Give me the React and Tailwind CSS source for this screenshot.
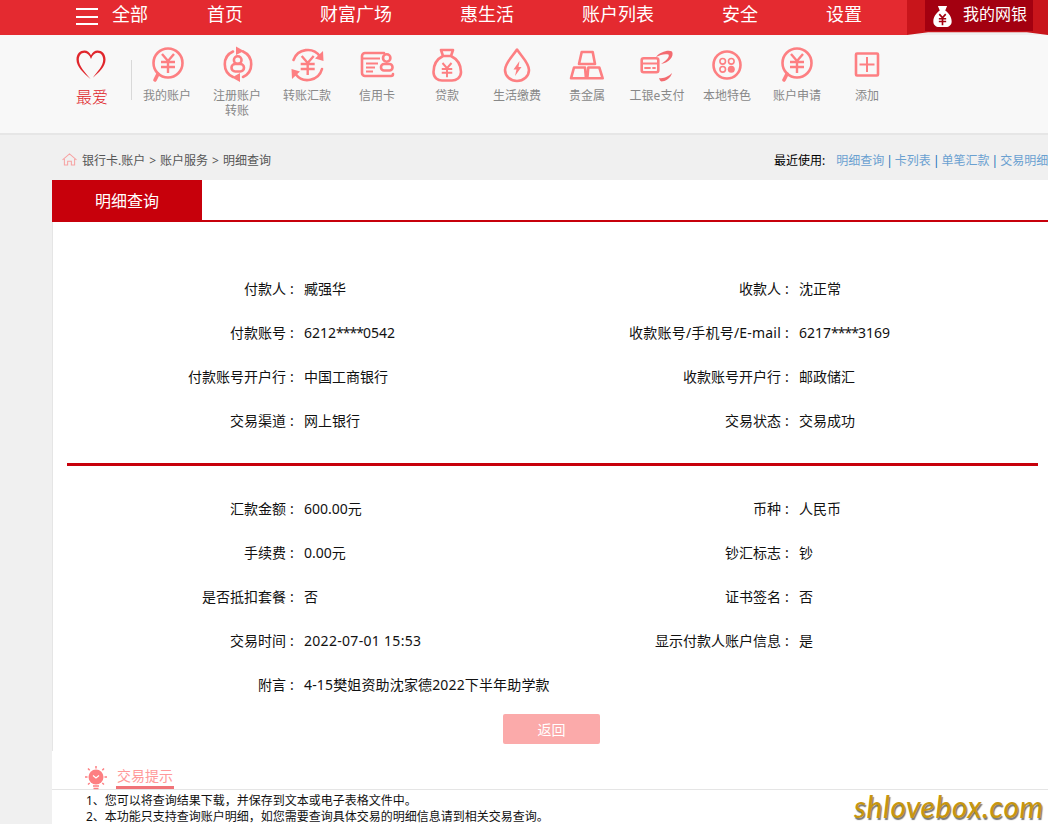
const PINK = "#fd7f82";

function Yen({ x = 22, y = 20, s = 1, w = 2.4 }) {
  return (
    <g transform={`translate(${x} ${y}) scale(${s})`} stroke={PINK} strokeWidth={w} fill="none">
      <path d="M-6-8 0-1 6-8M-7 0H7M-7 5H7M0-1V11" />
    </g>
  );
}

const S = { fill: "none", stroke: PINK, strokeWidth: 2.6, strokeLinecap: "round", strokeLinejoin: "round" };

function Icon({ children }) {
  return (
    <svg viewBox="0 0 44 44" className="w-[44px] h-[44px] block">
      {children}
    </svg>
  );
}

const icons = {
  account: (
    <Icon>
      <circle cx="23" cy="20" r="14.5" {...S} />
      <path d="M13 31 10 37" {...S} strokeWidth="3.6" />
      <Yen x={23} y={19} />
    </Icon>
  ),
  register: (
    <Icon>
      <path d="M28 8.500A14 14 0 0 1 28 34M18 34A14 14 0 0 1 18 8.500" {...S} />
      <path d="M21 3.500 29 8 21 12ZM25 30 17 34.500 25 39Z" fill={PINK} />
      <circle cx="22.700" cy="17" r="3.800" {...S} />
      <rect x="16.500" y="21" width="12.500" height="7.500" rx="3.700" {...S} />
    </Icon>
  ),
  transfer: (
    <Icon>
      <path d="M8.500 17A15 15 0 0 1 35 13.500M37 26A15 15 0 0 1 10.500 31" {...S} />
      <path d="M38 8 38.500 18 30 15.500ZM7 36 6.500 26 15 28.500Z" fill={PINK} />
      <Yen x={22.700} y={21} />
    </Icon>
  ),
  card: (
    <Icon>
      <path d="M29 10H10a3 3 0 0 0-3 3V30a3 3 0 0 0 3 3H36a2 2 0 0 0 2-2" {...S} />
      <path d="M8 15.500H25M11 20.500H23M11 24.500H20M11 28.500H18" {...S} strokeWidth="1.800" strokeLinecap="butt" />
      <circle cx="31.700" cy="15" r="3.700" {...S} />
      <rect x="26" y="21" width="11.500" height="6.500" rx="3" {...S} />
    </Icon>
  ),
  loan: (
    <Icon>
      <path d="M16 7H28L26 13C32 16 36 22 36 29 36 35 31 37.500 27 37.500H17C13 37.500 8.500 35 8.500 29 8.500 22 12 16 18 13ZM18 13H26" {...S} />
      <Yen x={22} y={26} s={0.75} w={2.600} />
    </Icon>
  ),
  life: (
    <Icon>
      <path d="M22 6.500C17 14 10 20 10 27A12 11 0 0 0 34 27C34 20 27 14 22 6.500Z" {...S} />
      <path d="M24.500 18 18.500 26.500H21.500L20 33 26.500 24H23.500Z" fill={PINK} />
    </Icon>
  ),
  gold: (
    <Icon>
      <path d="M16.700 9H27.700L30 21H14ZM9 24.500H20L21 35.300H6ZM23.300 24.500H34.300L37.700 35.300H22.300Z" {...S} />
    </Icon>
  ),
  epay: (
    <Icon>
      <rect x="6.700" y="15.300" width="16.600" height="14" rx="2" {...S} />
      <path d="M7 20.500H23" {...S} strokeWidth="1.800" />
      <path d="M10 25H15M18 25H20" {...S} strokeWidth="1.800" />
      <path d="M21 14C25 9 33 6.500 37 8.500 39.500 13 34 20 26 21 31 18 35 14 33.500 11.500 29.500 10.500 25 12 21 14Z" fill="#f36b70" />
      <path d="M24 35C29 36 34 33 37 30 36 35 30 38.500 26.500 38.500 25 38 24.500 36.500 24 35Z" fill="#f36b70" />
    </Icon>
  ),
  local: (
    <Icon>
      <circle cx="22" cy="22" r="13.500" {...S} />
      <g fill="none" stroke={PINK} strokeWidth="1.600">
        <circle cx="17.700" cy="18.300" r="2.800" />
        <circle cx="26.300" cy="18.300" r="2.800" />
        <circle cx="17.700" cy="26.300" r="2.800" />
      </g>
      <circle cx="26.300" cy="26.300" r="3.500" fill={PINK} />
    </Icon>
  ),
  apply: (
    <Icon>
      <circle cx="22" cy="20" r="14.500" {...S} />
      <path d="M12 31 9 37" {...S} strokeWidth="3.600" />
      <Yen x={22} y={19} />
    </Icon>
  ),
  add: (
    <Icon>
      <rect x="11" y="10.500" width="22" height="22" rx="1" {...S} strokeLinejoin="miter" />
      <path d="M22 14V29M14.500 21.500H29.500" fill="none" stroke={PINK} strokeWidth="2" />
    </Icon>
  ),
};

const items = [
  ["account", ["我的账户"]],
  ["register", ["注册账户", "转账"]],
  ["transfer", ["转账汇款"]],
  ["card", ["信用卡"]],
  ["loan", ["贷款"]],
  ["life", ["生活缴费"]],
  ["gold", ["贵金属"]],
  ["epay", ["工银e支付"]],
  ["local", ["本地特色"]],
  ["apply", ["账户申请"]],
  ["add", ["添加"]],
];

function Card({ a, b }) {
  return (
    <>
      {a}
      <span className="tracking-[-1px]">****</span>
      {b}
    </>
  );
}

const firstRows = [
  ["付款人", "臧强华", "收款人", "沈正常"],
  [
    "付款账号",
    <Card a="6212" b="0542" />,
    <span className="tracking-[0.2px]">收款账号/手机号/E-mail</span>,
    <Card a="6217" b="3169" />,
  ],
  ["付款账号开户行", "中国工商银行", "收款账号开户行", "邮政储汇"],
  ["交易渠道", "网上银行", "交易状态", "交易成功"],
];

const secondRows = [
  ["汇款金额", "600.00元", "币种", "人民币"],
  ["手续费", "0.00元", "钞汇标志", "钞"],
  ["是否抵扣套餐", "否", "证书签名", "否"],
  ["交易时间", <span className="tracking-[0.3px]">2022-07-01 15:53</span>, "显示付款人账户信息", "是"],
  ["附言", <span className="tracking-[0.15px]">4-15樊姐资助沈家德2022下半年助学款</span>, "", ""],
];

function Label({ text }) {
  if (!text) return <div />;
  return (
    <div className="text-right whitespace-nowrap">
      {text}
      <span className="inline-block w-[12px] text-center">:</span>
    </div>
  );
}

function Rows({ rows }) {
  return (
    <div className="grid grid-cols-[246px_249px_246px_1fr] auto-rows-[44px] items-center text-[14px] leading-[22px] text-[#111]">
      {rows.map((r) => (
        <div className="contents" key={r[0]}>
          <Label text={r[0]} />
          <div className="pl-[6px] whitespace-nowrap">{r[1]}</div>
          <Label text={r[2]} />
          <div className="pl-[6px] whitespace-nowrap">{r[3]}</div>
        </div>
      ))}
    </div>
  );
}

function NavItem({ children, className }) {
  return <span className={`whitespace-nowrap ${className}`}>{children}</span>;
}

export default function App() {
  return (
    <div className="relative h-[824px] w-[1048px] overflow-hidden bg-[#f0f0f0] font-['Noto_Sans','Noto_Sans_CJK_SC',sans-serif]">
      {/* top nav */}
      <div className="relative h-[35px] bg-[#e42a30] text-white text-[18px] leading-[28px] flex items-start pl-[76px]">
        <div className="flex flex-col gap-[5.500px] w-[22px] mt-[8px]">
          <span className="h-[2px] bg-white" />
          <span className="h-[2px] bg-white" />
          <span className="h-[2px] bg-white" />
        </div>
        <NavItem className="ml-[14px]">全部</NavItem>
        <NavItem className="ml-[59px]">首页</NavItem>
        <NavItem className="ml-[77px]">财富广场</NavItem>
        <NavItem className="ml-[68px]">惠生活</NavItem>
        <NavItem className="ml-[68px]">账户列表</NavItem>
        <NavItem className="ml-[68px]">安全</NavItem>
        <NavItem className="ml-[68px]">设置</NavItem>
        <div className="absolute right-0 top-0 w-[141px] h-[35px] bg-[#f0f0f0]">
          <div className="h-full bg-[#c8151b] [clip-path:polygon(0_0,100%_0,100%_100%,85%_92%,15%_92%,0_100%)]" />
          <div className="absolute left-[18px] top-0 w-[108px] h-[31px] bg-[#a30010] flex items-center text-[16px] pb-[3px]">
            <svg viewBox="0 0 20 24" className="w-[19px] h-[22px] ml-[8px] mt-[3px] shrink-0">
              <path d="M5 1H15L13 6C17 9 20 13 20 18 20 22 17 24 14 24H6C3 24 0 22 0 18 0 13 3 9 7 6Z" fill="#fff" />
              <path d="M6.500 10 10 14 13.500 10M6 15H14M6 18H14M10 14V22" fill="none" stroke="#a30010" strokeWidth="1.800" />
            </svg>
            <span className="ml-[11px] whitespace-nowrap">我的网银</span>
          </div>
        </div>
      </div>

      {/* shortcut bar */}
      <div className="h-[100px] bg-[#f8f8f8] border-b-2 border-[#e6e6e6] flex items-start pl-[76px]">
        <div className="w-[32px] pt-[15px] flex flex-col items-center shrink-0">
          <svg viewBox="0 0 32 32" className="w-[30px] h-[30px] block mr-[2px]">
            <path
              fillRule="evenodd"
              d="M15.500 31C8 24 0.500 18 0.500 10 0.500 4 4.500 0.500 9 0.500 12 0.500 14.500 2.500 16 5.500 17.500 2.500 20 0.500 23 0.500 27.500 0.500 31.500 4 31.500 10 31.500 18 24 24 18 29.500 23 23 29 17 29 10.500 29 6 26.500 3 23 3 20 3 17.500 5.500 16 9.500 14.500 5.500 12 3 9 3 5.500 3 3 6 3 10.500 3 17 9.500 24 15.500 31Z"
              fill="#e0262c"
            />
          </svg>
          <div className="text-[16px] leading-[20px] font-light text-[#e0262c] mt-[7px] whitespace-nowrap">最爱</div>
        </div>
        <div className="w-[1px] h-[40px] bg-[#d9d9d9] ml-[23px] mt-[25px] shrink-0" />
        {items.map(([key, lines]) => (
          <div key={key} className="w-[70px] shrink-0 pt-[8px] flex flex-col items-center text-[12px] leading-[15px] text-[#888]">
            {icons[key]}
            <div className="mt-[1px] text-center whitespace-nowrap">
              {lines.map((l) => (
                <div key={l}>{l}</div>
              ))}
            </div>
          </div>
        ))}
      </div>

      {/* breadcrumb */}
      <div className="h-[45px] flex items-center pl-[62px] text-[12px] whitespace-nowrap overflow-hidden pt-[7px]">
        <svg viewBox="0 0 16 14" className="w-[15px] h-[13px] mb-[3px] shrink-0" fill="none" stroke="#f7a3a3" strokeWidth="1.100">
          <path d="M0.500 7.500 8 1 15.500 7.500M2.500 6.500V13H6V9H10V13H13.500V6.500" />
        </svg>
        <span className="ml-[5px] text-[#555]">银行卡.账户</span>
        <span className="mx-[4px] text-[#555]">&gt;</span>
        <span className="text-[#555]">账户服务</span>
        <span className="mx-[4px] text-[#555]">&gt;</span>
        <span className="text-[#555]">明细查询</span>
        <span className="ml-[503px] text-black">最近使用:</span>
        <span className="ml-[11px] text-[#6aa0d0]">明细查询</span>
        <span className="mx-[2px] text-[#1a70b8]">|</span>
        <span className="text-[#6aa0d0]">卡列表</span>
        <span className="mx-[2px] text-[#1a70b8]">|</span>
        <span className="text-[#6aa0d0]">单笔汇款</span>
        <span className="mx-[2px] text-[#1a70b8]">|</span>
        <span className="text-[#6aa0d0]">交易明细</span>
      </div>

      {/* main */}
      <div className="ml-[52px] bg-white">
        <div className="h-[42px] border-b-2 border-[#c7000b]">
          <div className="w-[150px] h-[42px] bg-[#c7000b] text-white text-[16px] flex items-center justify-center">明细查询</div>
        </div>
        <div className="border-l border-[#e5e5e5] h-[529px]">
          <div className="-ml-[1px] pt-[45px]">
            <Rows rows={firstRows} />
            <div className="h-[3px] bg-[#c7000b] ml-[15px] mr-[10px] mt-[20px] mb-[21px]" />
            <Rows rows={secondRows} />
            <div className="w-[97px] h-[30px] ml-[451px] mt-[7px] rounded-[2px] bg-[#fbaaaa] text-white text-[14px] flex items-center justify-center">返回</div>
          </div>
        </div>
        {/* tips */}
        <div className="h-[39px] border-b border-[#e5e5e5] flex items-start pl-[33px] pt-[15px]">
          <svg viewBox="0 0 22 24" className="w-[22px] h-[24px] shrink-0">
            <circle cx="11" cy="11" r="7.500" fill={PINK} />
            <path d="M8 9.500 11 12 14 9.500" fill="none" stroke="#fff" strokeWidth="1.200" />
            <path d="M11 0V2.500M3 2.500 4.700 4.200M19 2.500 17.300 4.200M0 11H2.500M19.500 11H22M3 18.500 4.700 17M19 18.500 17.300 17" stroke={PINK} strokeWidth="1.500" />
            <path d="M8 20H14M8.500 22.500H13.500" stroke={PINK} strokeWidth="1.500" />
          </svg>
          <div className="ml-[9px] h-[23px] w-[58px] border-b-[3px] border-[#f07378] text-[14px] leading-[20px] text-[#f99] text-center whitespace-nowrap">交易提示</div>
        </div>
        <div className="pl-[34px] pt-[3px] text-[12px] leading-[16px] text-[#111] whitespace-nowrap">
          <div>1、您可以将查询结果下载，并保存到文本或电子表格文件中。</div>
          <div>2、本功能只支持查询账户明细，如您需要查询具体交易的明细信息请到相关交易查询。</div>
        </div>
      </div>

      {/* watermark */}
      <div className="absolute left-[854px] top-[788px] text-[30px] leading-[36px] italic font-medium tracking-[0.5px] text-[#c8960f] font-['Lato',sans-serif] [text-shadow:1px_2px_1px_#777] whitespace-nowrap">
        shlovebox.com
      </div>
    </div>
  );
}
